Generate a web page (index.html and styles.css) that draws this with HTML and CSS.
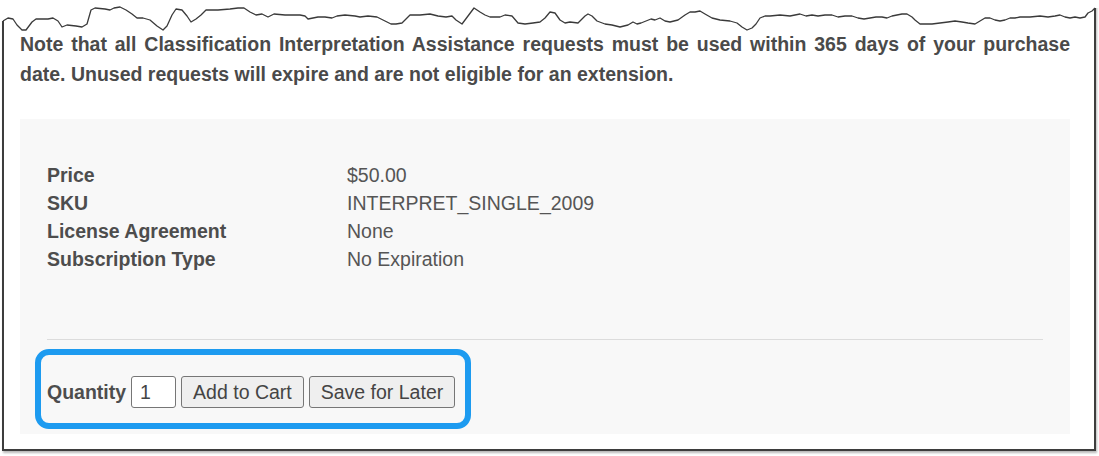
FILE: index.html
```html
<!DOCTYPE html>
<html>
<head>
<meta charset="utf-8">
<link rel="stylesheet" href="styles.css">
</head>
<body>
<div class="frame">
  <p class="note">Note that all Classification Interpretation Assistance requests must be used within 365 days of your purchase date. Unused requests will expire and are not eligible for an extension.</p>
  <div class="panel">
    <dl class="specs">
      <div class="row"><dt>Price</dt><dd>$50.00</dd></div>
      <div class="row"><dt>SKU</dt><dd>INTERPRET_SINGLE_2009</dd></div>
      <div class="row"><dt>License Agreement</dt><dd>None</dd></div>
      <div class="row"><dt>Subscription Type</dt><dd>No Expiration</dd></div>
    </dl>
    <hr class="sep">
    <form class="buy">
      <label class="qty-label" for="qty">Quantity</label>
      <input class="qty" id="qty" type="text" value="1">
      <button class="btn" type="button">Add to Cart</button>
      <button class="btn" type="button">Save for Later</button>
      <span class="highlight"></span>
    </form>
  </div>
</div>
<svg class="torn" width="1099" height="36" viewBox="0 0 1099 36">
  <polygon class="torn-fill" points="0,0 0,21 3,21 8,18 13,19 17,25 22,30 26,30 32,22 36,19 48,19 53,18 58,21 62,27 67,25 76,26 82,27 87,24 91,10 95,8 105,9 110,10 114,8 120,7 126,10 132,14 137,18 143,18 150,20 157,26 163,30 167,26 172,15 176,9 182,10 187,16 191,22 196,19 201,15 206,10 218,10 230,9 238,8 244,8 250,12 256,15 262,14 268,17 274,14 285,15 300,15 305,16 308,19 313,18 318,17 325,17 332,18 337,16 345,15 355,16 360,17 368,16 377,17 385,21 391,24 396,24 402,23 410,15 420,15 430,14 438,16 446,17 452,16 456,20 462,24 468,16 474,8 480,12 485,15 490,17 500,17 505,15 512,16 518,23 525,24 533,23 540,22 545,18 550,12 555,13 560,20 565,23 570,22 578,23 585,16 588,14 592,16 597,21 605,24 612,25 620,27 628,25 633,22 637,24 641,23 646,21 651,19 655,20 660,18 665,21 670,22 678,20 685,15 690,12 695,12 700,11 705,14 712,18 720,20 730,21 737,23 742,27 747,30 752,28 756,24 760,18 765,16 770,16 780,15 790,16 800,14 806,16 812,15 818,16 825,15 832,15 838,17 845,16 852,16 858,18 864,19 870,18 876,17 882,17 887,18 892,16 897,15 902,14 907,14 912,17 915,20 920,24 932,24 940,23 948,22 955,21 962,22 968,23 975,24 980,21 985,18 990,18 995,20 1000,21 1005,20 1010,18 1015,18 1020,17 1030,17 1040,16 1048,17 1055,16 1060,15 1065,17 1070,18 1075,17 1080,18 1085,17 1088,13 1092,11 1095,8 1099,8 1099,0"/>
  <polyline class="torn-line" points="3,21 8,18 13,19 17,25 22,30 26,30 32,22 36,19 48,19 53,18 58,21 62,27 67,25 76,26 82,27 87,24 91,10 95,8 105,9 110,10 114,8 120,7 126,10 132,14 137,18 143,18 150,20 157,26 163,30 167,26 172,15 176,9 182,10 187,16 191,22 196,19 201,15 206,10 218,10 230,9 238,8 244,8 250,12 256,15 262,14 268,17 274,14 285,15 300,15 305,16 308,19 313,18 318,17 325,17 332,18 337,16 345,15 355,16 360,17 368,16 377,17 385,21 391,24 396,24 402,23 410,15 420,15 430,14 438,16 446,17 452,16 456,20 462,24 468,16 474,8 480,12 485,15 490,17 500,17 505,15 512,16 518,23 525,24 533,23 540,22 545,18 550,12 555,13 560,20 565,23 570,22 578,23 585,16 588,14 592,16 597,21 605,24 612,25 620,27 628,25 633,22 637,24 641,23 646,21 651,19 655,20 660,18 665,21 670,22 678,20 685,15 690,12 695,12 700,11 705,14 712,18 720,20 730,21 737,23 742,27 747,30 752,28 756,24 760,18 765,16 770,16 780,15 790,16 800,14 806,16 812,15 818,16 825,15 832,15 838,17 845,16 852,16 858,18 864,19 870,18 876,17 882,17 887,18 892,16 897,15 902,14 907,14 912,17 915,20 920,24 932,24 940,23 948,22 955,21 962,22 968,23 975,24 980,21 985,18 990,18 995,20 1000,21 1005,20 1010,18 1015,18 1020,17 1030,17 1040,16 1048,17 1055,16 1060,15 1065,17 1070,18 1075,17 1080,18 1085,17 1088,13 1092,11 1095,8"/>
</svg>
</body>
</html>
```

FILE: styles.css
```css
html, body {
  margin: 0;
  padding: 0;
  background: #ffffff;
}

body {
  font-family: "Liberation Sans", Arial, sans-serif;
  color: #4d4d4d;
  width: 1099px;
  height: 456px;
  overflow: hidden;
}

.frame {
  box-sizing: border-box;
  width: 1094px;
  height: 451px;
  margin-left: 2px;
  border: 2px solid #3d3d3d;
  border-top: none;
  padding: 29px 24px 0 16px;
  box-shadow: 1px 2px 2px rgba(0, 0, 0, 0.28);
}

.note {
  margin: 0 0 30px;
  font-size: 19.5px;
  font-weight: bold;
  line-height: 30px;
  text-align: justify;
  color: #4a4a4a;
}

.panel {
  background: #f8f8f8;
  padding: 42px 27px 26px 27px;
}

.specs {
  margin: 0;
  font-size: 19.5px;
  line-height: 28px;
}

.row {
  display: flex;
}

.row dt {
  width: 300px;
  font-weight: bold;
  color: #4d4d4d;
}

.row dd {
  margin: 0;
  color: #555555;
}

.sep {
  margin: 66px 0 0;
  border: none;
  border-top: 1px solid #dcdcdc;
  height: 0;
}

.buy {
  position: relative;
  display: flex;
  align-items: center;
  gap: 5px;
  margin: 36px 0 0;
  height: 32px;
  font-size: 19.5px;
}

.qty-label {
  font-weight: bold;
  color: #4d4d4d;
}

.qty {
  box-sizing: border-box;
  width: 45px;
  height: 32px;
  margin: 0;
  padding: 0 0 0 8px;
  border: 1px solid #767676;
  border-radius: 3px;
  background: #ffffff;
  font-family: inherit;
  font-size: 19.5px;
  color: #444444;
}

.btn {
  box-sizing: border-box;
  height: 32px;
  margin: 0;
  padding: 0 11px;
  border: 1px solid #767676;
  border-radius: 3px;
  background: #efefef;
  font-family: inherit;
  font-size: 19.5px;
  color: #444444;
}

.highlight {
  position: absolute;
  left: -12px;
  top: -27px;
  width: 436px;
  height: 80px;
  box-sizing: border-box;
  border: 6px solid #1d9bf0;
  border-radius: 14px;
  pointer-events: none;
}

.torn {
  position: absolute;
  left: 0;
  top: 0;
}

.torn-fill {
  fill: #ffffff;
  stroke: none;
}

.torn-line {
  fill: none;
  stroke: #3a3a3a;
  stroke-width: 1.3;
  stroke-linejoin: round;
}
```
